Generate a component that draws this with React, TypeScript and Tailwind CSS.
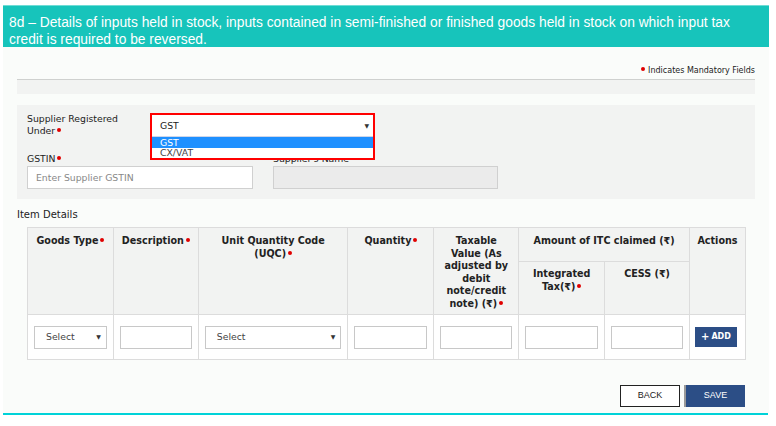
import React from 'react';

function Req() {
  return <span className="inline-block w-[4px] h-[4px] rounded-full bg-[#e00000] ml-[2px] align-top mt-[3px]" />;
}

function Caret() {
  return <span className="text-[6px] text-[#333] leading-none">▼</span>;
}

export default function App() {
  return (
    <div className="w-[776px] h-[426px] bg-white font-['DejaVu_Sans',sans-serif] text-[#333]">
      <div className="pt-[5px] pl-[3px] pr-[7px]">
        <div className="border-t border-[#6fdcd5] bg-[#17c4bb] px-[6px] pt-[8px] pb-0 h-[42px] text-white text-[13.8px] leading-[17px] font-['Liberation_Sans',sans-serif]">
          8d – Details of inputs held in stock, inputs contained in semi-finished or finished goods held in stock on which input tax credit is required to be reversed.
        </div>
        <div className="bg-[#fafcfa] h-[366px] px-[14px] flex flex-col">
          <div className="flex justify-end items-center pt-[19px] pr-0 text-[8px] leading-[10px] text-[#222]">
            <span className="inline-block w-[4px] h-[4px] rounded-full bg-[#e00000] mr-[3px] self-start mt-[1px]" />
            Indicates Mandatory Fields
          </div>
          <div className="mt-[3px] border-t border-[#cfd1cf] bg-[#f2f3f2] h-[15px]" />
          <div className="mt-[11px] bg-[#f2f3f2] h-[94px] px-[10px] pt-[8px] relative">
            <div className="flex">
              <div className="w-[123px] text-[9.3px] leading-[12px] text-[#222]">
                Supplier Registered<br />Under<Req />
              </div>
              <div className="relative">
                <div className="w-[225px] border-[2px] border-[#ff0000] p-0 bg-white">
                  <div className="h-[22px] flex items-center justify-between pl-[8px] pr-[4px] border-b border-[#cfd6e8] text-[9.3px] text-[#222]">
                    <span>GST</span>
                    <Caret />
                  </div>
                  <div className="h-[11px] bg-[#1e90ff] text-white text-[9.3px] leading-[11px] pl-[8px]">GST</div>
                  <div className="h-[10px] text-[9.3px] leading-[10px] pl-[8px] text-[#444] overflow-hidden">CX/VAT</div>
                </div>
              </div>
            </div>
            <div className="flex gap-[20px] mt-[-7px]">
              <div className="w-[226px]">
                <div className="text-[9.3px] leading-[12px] text-[#222] h-[12px]">GSTIN<Req /></div>
                <div className="mt-[1px] h-[23px] border border-[#d0d0d0] bg-white flex items-center pl-[8px] text-[9.3px] text-[#888]">
                  Enter Supplier GSTIN
                </div>
              </div>
              <div className="w-[225px]">
                <div className="text-[9.3px] leading-[12px] text-[#222] h-[12px]">Supplier's Name</div>
                <div className="mt-[1px] h-[23px] border border-[#d0d0d0] bg-[#ebebeb]" />
              </div>
            </div>
          </div>
          <div className="mt-[10px] text-[10px] leading-[12px] text-[#222]">Item Details</div>
          <div className="mt-[6px] ml-[10px] w-[719px]">
            <table className="border-collapse w-full text-[9.6px] text-[#222]">
              <colgroup>
                <col className="w-[86px]" />
                <col className="w-[85px]" />
                <col className="w-[150px]" />
                <col className="w-[86px]" />
                <col className="w-[85px]" />
                <col className="w-[86px]" />
                <col className="w-[85px]" />
                <col className="w-[56px]" />
              </colgroup>
              <thead className="bg-[#f2f3f2] font-bold leading-[12.5px]">
                <tr>
                  <th rowSpan={2} className="border border-[#dcdcdc] align-top pt-[7px] h-[87px] font-bold">Goods Type<Req /></th>
                  <th rowSpan={2} className="border border-[#dcdcdc] align-top pt-[7px] font-bold">Description<Req /></th>
                  <th rowSpan={2} className="border border-[#dcdcdc] align-top pt-[7px] font-bold px-[4px]">Unit Quantity Code<br />(UQC)<Req /></th>
                  <th rowSpan={2} className="border border-[#dcdcdc] align-top pt-[7px] font-bold">Quantity<Req /></th>
                  <th rowSpan={2} className="border border-[#dcdcdc] align-top pt-[7px] font-bold px-[6px]">Taxable<br />Value (As<br />adjusted by<br />debit<br />note/credit<br />note) (₹)<Req /></th>
                  <th colSpan={2} className="border border-[#dcdcdc] align-top pt-[7px] h-[34px] font-bold">Amount of ITC claimed (₹)</th>
                  <th rowSpan={2} className="border border-[#dcdcdc] align-top pt-[7px] font-bold">Actions</th>
                </tr>
                <tr>
                  <th className="border border-[#dcdcdc] align-top pt-[6px] font-bold">Integrated<br />Tax(₹)<Req /></th>
                  <th className="border border-[#dcdcdc] align-top pt-[6px] font-bold">CESS (₹)</th>
                </tr>
              </thead>
              <tbody className="bg-white">
                <tr className="h-[45px]">
                  <td className="border border-[#dcdcdc] px-[6px]">
                    <div className="h-[23px] border border-[#c8c8c8] flex items-center justify-between pl-[11px] pr-[5px] text-[#444] font-normal text-[9.3px]">
                      <span>Select</span><Caret />
                    </div>
                  </td>
                  <td className="border border-[#dcdcdc] px-[6px]">
                    <div className="h-[23px] border border-[#c8c8c8]" />
                  </td>
                  <td className="border border-[#dcdcdc] px-[6px]">
                    <div className="h-[23px] border border-[#c8c8c8] flex items-center justify-between pl-[11px] pr-[5px] text-[#444] text-[9.3px]">
                      <span>Select</span><Caret />
                    </div>
                  </td>
                  <td className="border border-[#dcdcdc] px-[6px]">
                    <div className="h-[23px] border border-[#c8c8c8]" />
                  </td>
                  <td className="border border-[#dcdcdc] px-[6px]">
                    <div className="h-[23px] border border-[#c8c8c8]" />
                  </td>
                  <td className="border border-[#dcdcdc] px-[6px]">
                    <div className="h-[23px] border border-[#c8c8c8]" />
                  </td>
                  <td className="border border-[#dcdcdc] px-[6px]">
                    <div className="h-[23px] border border-[#c8c8c8]" />
                  </td>
                  <td className="border border-[#dcdcdc] px-[5px]">
                    <div className="h-[20px] w-[42px] bg-[#2c4e86] text-white text-[8px] font-bold flex items-center justify-center gap-[2px]">
                      <span className="text-[10px] leading-none">+</span>ADD
                    </div>
                  </td>
                </tr>
              </tbody>
            </table>
          </div>
          <div className="mt-auto mb-[6px] flex justify-end gap-[4px] pr-[10px] font-['Liberation_Sans',sans-serif] text-[9px]">
            <div className="w-[60px] h-[22px] border border-[#222] flex items-center justify-center text-[#222] bg-white">BACK</div>
            <div className="w-[61px] h-[22px] bg-[#2c4e86] border-l-2 border-[#9a9a9a] flex items-center justify-center text-white">SAVE</div>
          </div>
        </div>
        <div className="h-[2px] bg-[#00d2d8] mr-[1px]" />
      </div>
    </div>
  );
}
